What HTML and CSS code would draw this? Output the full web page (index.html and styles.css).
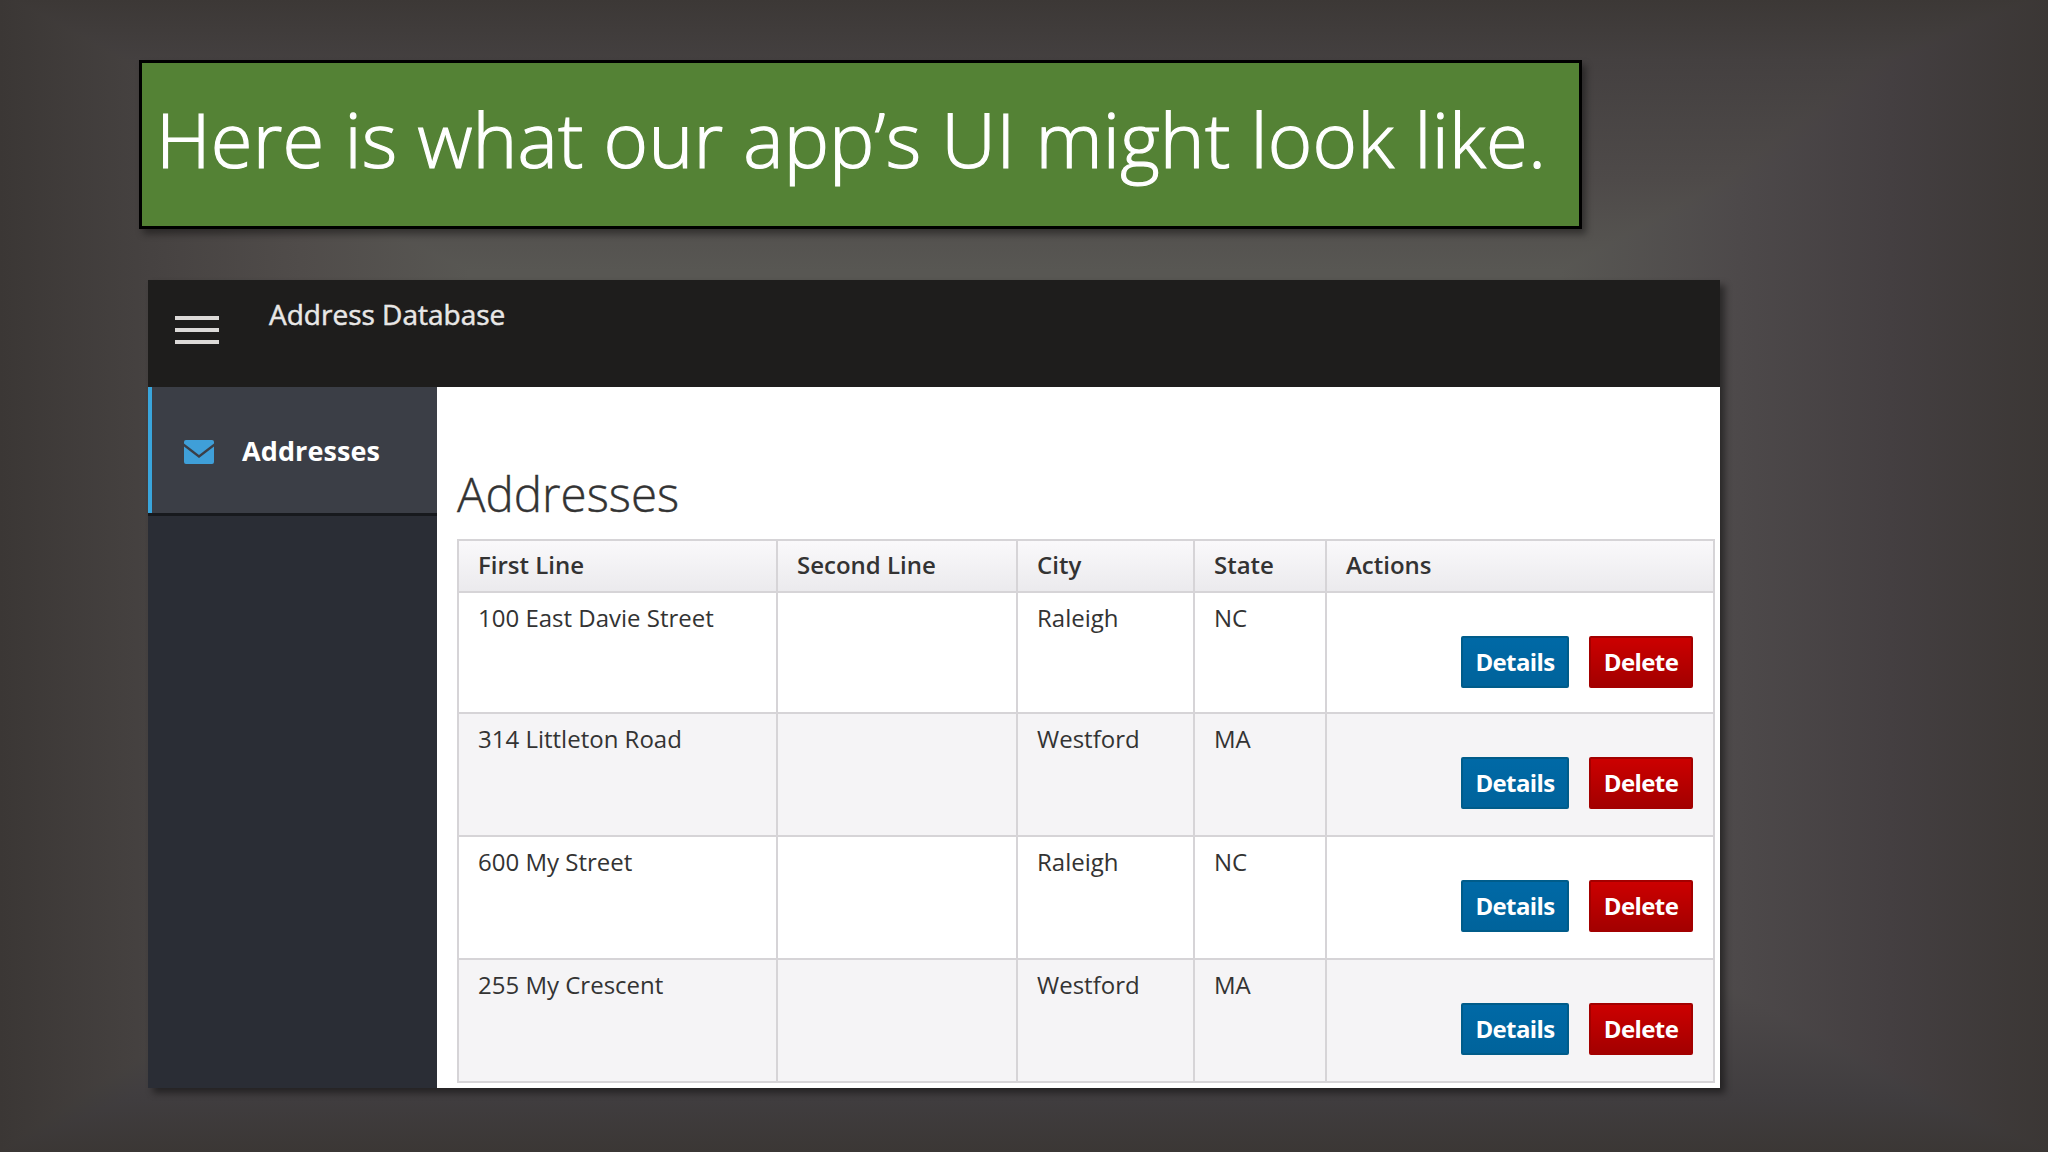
FILE: index.html
```html
<!DOCTYPE html>
<html lang="en">
<head>
    <meta charset="UTF-8">
    <meta name="viewport" content="width=device-width, initial-scale=1.0">
    <title>Address Database</title>
    <link rel="stylesheet" href="styles.css">
</head>
<body>
    <div class="title-box">
        <h1>Here is what our app’s UI might look like.</h1>
    </div>

    <div class="app">
        <!-- Top bar -->
        <header class="navbar">
            <button class="menu-button" aria-label="Menu">
                <span></span>
                <span></span>
                <span></span>
            </button>
            <span class="brand">Address Database</span>
        </header>

        <div class="main">
            <!-- Side navigation -->
            <nav class="sidebar">
                <a class="nav-item active" href="#">
                    <svg class="nav-icon" viewBox="0 0 30 24">
                        <path d="M2 0h26a2 2 0 0 1 2 2v1.500L15 15 0 3.500V2a2 2 0 0 1 2-2z"/>
                        <path d="M0 6.500L15 18 30 6.500V22a2 2 0 0 1-2 2H2a2 2 0 0 1-2-2z"/>
                    </svg>
                    <span>Addresses</span>
                </a>
            </nav>

            <!-- Address list -->
            <div class="content">
                <h2>Addresses</h2>
                <table>
                    <thead>
                        <tr>
                            <th class="col-first">First Line</th>
                            <th class="col-second">Second Line</th>
                            <th class="col-city">City</th>
                            <th class="col-state">State</th>
                            <th>Actions</th>
                        </tr>
                    </thead>
                    <tbody>
                        <tr>
                            <td>100 East Davie Street</td>
                            <td></td>
                            <td>Raleigh</td>
                            <td>NC</td>
                            <td>
                                <div class="actions">
                                    <button class="btn btn-details">Details</button>
                                    <button class="btn btn-delete">Delete</button>
                                </div>
                            </td>
                        </tr>
                        <tr>
                            <td>314 Littleton Road</td>
                            <td></td>
                            <td>Westford</td>
                            <td>MA</td>
                            <td>
                                <div class="actions">
                                    <button class="btn btn-details">Details</button>
                                    <button class="btn btn-delete">Delete</button>
                                </div>
                            </td>
                        </tr>
                        <tr>
                            <td>600 My Street</td>
                            <td></td>
                            <td>Raleigh</td>
                            <td>NC</td>
                            <td>
                                <div class="actions">
                                    <button class="btn btn-details">Details</button>
                                    <button class="btn btn-delete">Delete</button>
                                </div>
                            </td>
                        </tr>
                        <tr>
                            <td>255 My Crescent</td>
                            <td></td>
                            <td>Westford</td>
                            <td>MA</td>
                            <td>
                                <div class="actions">
                                    <button class="btn btn-details">Details</button>
                                    <button class="btn btn-delete">Delete</button>
                                </div>
                            </td>
                        </tr>
                    </tbody>
                </table>
            </div>
        </div>
    </div>
</body>
</html>
```
FILE: styles.css
```css
* {
    box-sizing: border-box;
}

body {
    margin: 0;
    height: 1152px;
    padding: 60px 0 0 139px;
    overflow: hidden;
    font-family: "Open Sans", "Noto Sans", sans-serif;
    /* the darker of the two gradients wins, giving a rectangular vignette */
    background-image:
        linear-gradient(to right, #3b3735, #464241 150px, #504c4a 300px, #585753 470px, #585753 1560px, #4d494a 1740px, #443f41 1890px, #3b3735),
        linear-gradient(to bottom, #3c3836, #444040 60px, #4e4a49 180px, #585753 270px, #585753 900px, #4b4748 1010px, #403d3f 1100px, #3b3735);
    background-blend-mode: darken;
}

h1, h2 {
    margin: 0;
    font-weight: 300;
}

.title-box {
    width: 1443px;
    height: 169px;
    padding: 0 0 11px 14px;
    display: flex;
    align-items: center;
    background-color: #548235;
    border: 3px solid black;
    box-shadow: 4px 5px 7px rgba(0, 0, 0, 0.4);
}

.title-box h1 {
    color: white;
    font-size: 76px;
    line-height: 100px;
    letter-spacing: 0.2px;
    white-space: nowrap;
    -webkit-text-stroke: 1.2px white;
}

.app {
    width: 1572px;
    height: 808px;
    margin: 51px 0 0 9px;
    display: flex;
    flex-direction: column;
    background-color: white;
    box-shadow: 5px 5px 7px rgba(0, 0, 0, 0.45);
}

.navbar {
    height: 107px;
    flex: none;
    display: flex;
    align-items: flex-start;
    background-color: #1e1d1c;
}

.menu-button {
    width: 44px;
    margin: 36px 50px 0 27px;
    padding: 0;
    display: flex;
    flex-direction: column;
    gap: 8px;
    background: none;
    border: none;
}

.menu-button span {
    height: 4px;
    background-color: #dcdad8;
}

.brand {
    margin-top: 14px;
    color: #e8e7e6;
    font-size: 28px;
    line-height: 40px;
    -webkit-text-stroke: 0.5px #e8e7e6;
}

.main {
    flex: 1;
    display: flex;
}

.sidebar {
    width: 289px;
    background-color: #2a2d35;
}

.nav-item {
    height: 129px;
    padding: 1px 0 0 33px;
    display: flex;
    align-items: center;
    gap: 28px;
    color: white;
    font-size: 27px;
    font-weight: 700;
    letter-spacing: 0.1px;
    text-decoration: none;
    background-color: #3b3e46;
    border-bottom: 3px solid #17191d;
    box-shadow: inset 4px 0 0 #39a5dc;
}

.nav-icon {
    width: 30px;
    height: 24px;
    margin: 2px 0 0 3px;
    fill: #3f9fd8;
}

.content {
    flex: 1;
    padding: 72px 5px 0 20px;
}

.content h2 {
    height: 80px;
    color: #333;
    font-size: 47.5px;
    line-height: 70px;
    -webkit-text-stroke: 0.4px #333;
}

table {
    width: 1258px;
    table-layout: fixed;
    border-collapse: collapse;
    color: #333;
    font-size: 24px;
    line-height: 32px;
}

th, td {
    padding: 8px 20px 8px 19px;
    border: 2px solid #d6d4d7;
    text-align: left;
    vertical-align: top;
}

th {
    height: 52px;
    font-weight: 600;
    background: linear-gradient(#faf9fb, #ebeaed);
}

td {
    height: 121px;
    padding-top: 9px;
}

tbody tr:nth-child(n + 2) td {
    height: 123px;
}

tbody tr:nth-child(even) {
    background-color: #f5f4f6;
}

.col-first {
    width: 319px;
}

.col-second {
    width: 240px;
}

.col-city {
    width: 177px;
}

.col-state {
    width: 132px;
}

.actions {
    padding-top: 34px;
    display: flex;
    justify-content: flex-end;
    gap: 20px;
}

.btn {
    width: 108px;
    height: 52px;
    padding: 0 0 2px;
    color: white;
    font-family: inherit;
    font-size: 24px;
    font-weight: 700;
    letter-spacing: -0.6px;
    border-radius: 2px;
}

.btn-details {
    background: linear-gradient(#0069a6, #00639b);
    border: 2px solid #005c8a;
}

.btn-delete {
    width: 104px;
    background: linear-gradient(#cc0000, #a30000);
    border: 2px solid #a30000;
}
```
